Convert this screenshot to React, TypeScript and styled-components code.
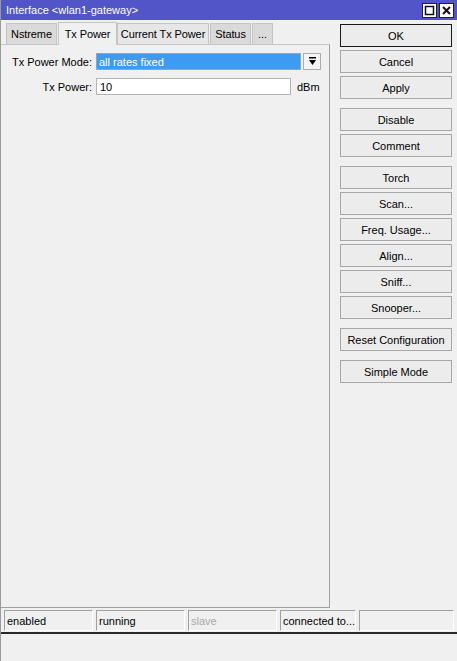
import React from "react";
import styled, { createGlobalStyle } from "styled-components";

const Global = createGlobalStyle`
  html, body { margin: 0; padding: 0; background: #f0f0f0; }
  body { font-family: "Liberation Sans", Arial, sans-serif; font-size: 11px; color: #000; }
  * { box-sizing: border-box; }
`;

const Window = styled.div`
  width: 457px;
  height: 661px;
  display: flex;
  flex-direction: column;
  background: #f0f0f0;
  border-left: 1px solid #9a9a9a;
  overflow: hidden;
`;

const TitleBar = styled.div`
  height: 20px;
  flex: none;
  background: #5155c8;
  color: #fff;
  display: flex;
  align-items: center;
  padding: 0 3px 0 6px;
  font-size: 11px;
  margin-left: -1px;
`;

const TitleText = styled.div`
  flex: 1;
`;

const TitleBtn = styled.div`
  width: 15px;
  height: 15px;
  background: #fff;
  border: 1px solid #222;
  display: flex;
  align-items: center;
  justify-content: center;
  margin-left: 2px;
`;

const Main = styled.div`
  display: flex;
  flex: none;
  height: 588px;
`;

const LeftCol = styled.div`
  width: 329px;
  display: flex;
  flex-direction: column;
  padding-top: 1px;
`;

const TabStrip = styled.div`
  display: flex;
  align-items: flex-end;
  padding-left: 5px;
  height: 23px;
  position: relative;
  z-index: 1;
`;

const Tab = styled.div<{ $active?: boolean; $light?: boolean; $w: number }>`
  width: ${(p) => p.$w}px;
  height: ${(p) => (p.$active ? 23 : 21)}px;
  display: flex;
  align-items: center;
  justify-content: center;
  background: ${(p) => (p.$active ? "#f0f0f0" : p.$light ? "#e6e6e6" : "#dadada")};
  border: 1px solid #c4c4c4;
  border-bottom: ${(p) => (p.$active ? "1px solid #f0f0f0" : "none")};
  margin-right: ${(p) => (p.$active ? 0 : 1)}px;
  margin-bottom: ${(p) => (p.$active ? -1 : 0)}px;
  white-space: nowrap;
  font-size: 11px;
  letter-spacing: -0.1px;
`;

const Panel = styled.div`
  flex: 1;
  border-top: 1px solid #c4c4c4;
  border-right: 1px solid #a0a0a0;
  border-bottom: 1px solid #a0a0a0;
  padding: 8px 0 0 0;
  display: flex;
  flex-direction: column;
  gap: 8px;
`;

const Row = styled.div`
  display: flex;
  align-items: center;
  height: 17px;
`;

const Label = styled.div`
  width: 91px;
  text-align: right;
  margin-right: 4px;
  white-space: nowrap;
`;

const SelectBox = styled.div`
  width: 205px;
  height: 17px;
  background: #3d9bf3;
  border: 1px solid #8aa8c8;
  color: #fff;
  display: flex;
  align-items: center;
  padding-left: 2px;
`;

const DropBtn = styled.div`
  width: 18px;
  height: 17px;
  margin-left: 2px;
  background: #f4f4f4;
  border: 1px solid #adadad;
  display: flex;
  align-items: center;
  justify-content: center;
`;

const Input = styled.div`
  width: 195px;
  height: 17px;
  background: #fff;
  border: 1px solid #b4b4b4;
  display: flex;
  align-items: center;
  padding-left: 3px;
`;

const Unit = styled.div`
  margin-left: 6px;
`;

const RightCol = styled.div`
  width: 112px;
  margin-left: 10px;
  padding-top: 4px;
  display: flex;
  flex-direction: column;
`;

const Group = styled.div`
  display: flex;
  flex-direction: column;
  gap: 3px;
  margin-bottom: 9px;
`;

const Button = styled.div<{ $default?: boolean }>`
  height: 23px;
  display: flex;
  align-items: center;
  justify-content: center;
  background: #ececec;
  border: 1px solid ${(p) => (p.$default ? "#1a1a1a" : "#a8a8a8")};
  font-size: 11px;
  white-space: nowrap;
`;

const StatusBar = styled.div`
  display: flex;
  gap: 3px;
  padding: 2px 3px 0 3px;
  height: 24px;
  flex: none;
`;

const Cell = styled.div<{ $w: number; $muted?: boolean }>`
  width: ${(p) => p.$w}px;
  height: 21px;
  border-top: 1px solid #a0a0a0;
  border-left: 1px solid #a0a0a0;
  border-bottom: 1px solid #fff;
  border-right: 1px solid #fff;
  display: flex;
  align-items: center;
  padding-left: 2px;
  color: ${(p) => (p.$muted ? "#a8a8a8" : "#000")};
  white-space: nowrap;
  overflow: hidden;
`;

const BottomRule = styled.div`
  height: 2px;
  background: #2a2a2a;
  margin-left: -1px;
  flex: none;
`;

const Rest = styled.div`
  flex: 1;
`;

export default function App() {
  return (
    <>
      <Global />
      <Window>
        <TitleBar>
          <TitleText>Interface &lt;wlan1-gateway&gt;</TitleText>
          <TitleBtn>
            <svg width="11" height="11" viewBox="0 0 11 11">
              <rect x="1.5" y="1.5" width="8" height="8" fill="none" stroke="#111" strokeWidth="1.5" />
            </svg>
          </TitleBtn>
          <TitleBtn>
            <svg width="11" height="11" viewBox="0 0 11 11">
              <path d="M2 2 L9 9 M9 2 L2 9" stroke="#111" strokeWidth="2" />
            </svg>
          </TitleBtn>
        </TitleBar>
        <Main>
          <LeftCol>
            <TabStrip>
              <Tab $w={51}>Nstreme</Tab>
              <Tab $w={59} $active>Tx Power</Tab>
              <Tab $w={92} $light>Current Tx Power</Tab>
              <Tab $w={41}>Status</Tab>
              <Tab $w={21}>...</Tab>
            </TabStrip>
            <Panel>
              <Row>
                <Label>Tx Power Mode:</Label>
                <SelectBox>all rates fixed</SelectBox>
                <DropBtn>
                  <svg width="9" height="9" viewBox="0 0 9 9">
                    <rect x="1" y="0" width="7" height="1.5" fill="#000" />
                    <path d="M1 3 H8 L4.5 8 Z" fill="#000" />
                  </svg>
                </DropBtn>
              </Row>
              <Row>
                <Label>Tx Power:</Label>
                <Input>10</Input>
                <Unit>dBm</Unit>
              </Row>
            </Panel>
          </LeftCol>
          <RightCol>
            <Group>
              <Button $default>OK</Button>
              <Button>Cancel</Button>
              <Button>Apply</Button>
            </Group>
            <Group>
              <Button>Disable</Button>
              <Button>Comment</Button>
            </Group>
            <Group>
              <Button>Torch</Button>
              <Button>Scan...</Button>
              <Button>Freq. Usage...</Button>
              <Button>Align...</Button>
              <Button>Sniff...</Button>
              <Button>Snooper...</Button>
            </Group>
            <Group>
              <Button>Reset Configuration</Button>
            </Group>
            <Group>
              <Button>Simple Mode</Button>
            </Group>
          </RightCol>
        </Main>
        <StatusBar>
          <Cell $w={90}>enabled</Cell>
          <Cell $w={90}>running</Cell>
          <Cell $w={90} $muted>slave</Cell>
          <Cell $w={77}>connected to...</Cell>
          <Cell $w={96}></Cell>
        </StatusBar>
        <BottomRule />
        <Rest />
      </Window>
    </>
  );
}
